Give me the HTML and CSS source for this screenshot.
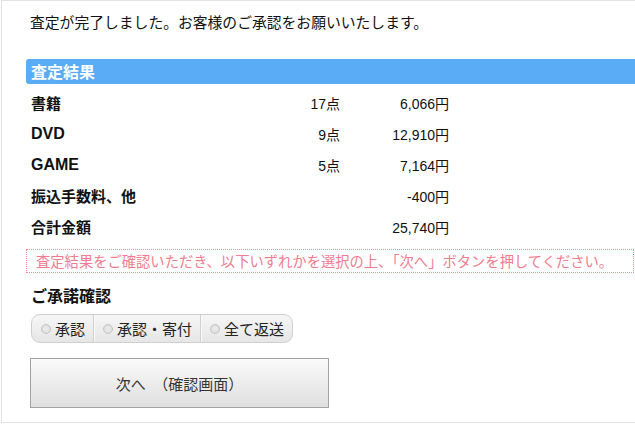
FILE: index.html
```html
<!DOCTYPE html>
<html lang="ja">
<head>
    <meta charset="UTF-8">
    <meta name="viewport" content="width=device-width, initial-scale=1.0">
    <title>査定結果</title>
    <link rel="stylesheet" href="styles.css">
</head>
<body>

    <div class="frame">
        <div class="content">
            <p class="intro">査定が完了しました。お客様のご承認をお願いいたします。</p>

            <h2 class="bar">査定結果</h2>

            <div class="result">
                <div class="label">書籍</div><div class="count">17点</div><div class="price">6,066円</div>
                <div class="label latin">DVD</div><div class="count">9点</div><div class="price">12,910円</div>
                <div class="label latin">GAME</div><div class="count">5点</div><div class="price">7,164円</div>
                <div class="label">振込手数料、他</div><div class="count"></div><div class="price">-400円</div>
                <div class="label">合計金額</div><div class="count"></div><div class="price">25,740円</div>
            </div>

            <p class="notice">査定結果をご確認いただき、以下いずれかを選択の上、「次へ」ボタンを押してください。</p>

            <h3 class="sub">ご承諾確認</h3>

            <div class="choices">
                <label class="choice"><span class="radio"></span>承認</label>
                <label class="choice"><span class="radio"></span>承認・寄付</label>
                <label class="choice"><span class="radio"></span>全て返送</label>
            </div>

            <button class="next">次へ　（確認画面）</button>
        </div>
    </div>

</body>
</html>
```

FILE: styles.css
```css
html, body {
    margin: 0;
    padding: 0;
    overflow: hidden;
}

body {
    font-family: "Noto Sans CJK JP", "Liberation Sans", sans-serif;
    color: #111;
    background-color: #fff;
    width: 635px;
    height: 424px;
}

.frame {
    margin-left: 1px;
    width: 660px;
    height: 423px;
    border: 1px solid #e2e2e2;
    border-right: none;
    box-sizing: border-box;
}

.content {
    width: 608px;
    padding-left: 24px;
}

.intro {
    margin: 0;
    padding: 11px 0 0 4px;
    font-size: 14.8px;
    line-height: 20px;
}

.bar {
    margin: 27px -20px 0 0;
    height: 25px;
    line-height: 25px;
    padding-left: 5px;
    background-color: #5aacf6;
    color: #fff;
    font-size: 16px;
    font-weight: bold;
    border-radius: 3px 0 0 3px;
}

.result {
    display: grid;
    grid-template-columns: 225px 84px 109px;
    grid-auto-rows: 31px;
    align-items: center;
    padding: 3px 0 0 5px;
    font-size: 14px;
}

.label {
    font-weight: bold;
    font-size: 15px;
}

.label.latin {
    font-family: "Liberation Sans", sans-serif;
    font-size: 16px;
}

.count, .price {
    text-align: right;
    font-family: "Liberation Sans", "Noto Sans CJK JP", sans-serif;
}

.notice {
    margin: 7px 0 0 0;
    height: 24px;
    line-height: 22px;
    box-sizing: border-box;
    border: 1px dotted #f08a9a;
    padding-left: 9px;
    color: #f07c8e;
    font-size: 14.3px;
}

.sub {
    margin: 11px 0 0 5px;
    font-size: 16px;
    line-height: 22px;
    font-weight: bold;
}

.choices {
    display: inline-flex;
    margin: 8px 0 0 5px;
    height: 29px;
    border: 1px solid #cfcfcf;
    border-radius: 9px;
    background: linear-gradient(#f6f6f6, #e6e6e6);
    box-sizing: border-box;
    overflow: hidden;
}

.choice {
    display: flex;
    align-items: center;
    gap: 4px;
    padding: 0 8px 0 9px;
    font-size: 15px;
    color: #222;
    border-left: 1px solid #d0d0d0;
    box-shadow: inset 1px 0 0 #fafafa;
}

.choice:first-child {
    border-left: none;
    box-shadow: none;
}

.radio {
    width: 10px;
    height: 10px;
    border-radius: 50%;
    border: 1px solid #c4c4c4;
    background: radial-gradient(circle at 50% 50%, #e8e8e8 30%, #d6d6d6 100%);
    box-sizing: border-box;
}

.next {
    display: block;
    margin: 15px 0 0 4px;
    width: 299px;
    height: 50px;
    border: 1px solid #a2a2a2;
    border-radius: 0;
    background: linear-gradient(#fafafa, #dfdfdf);
    font-family: "Noto Sans CJK JP", sans-serif;
    font-size: 15px;
    color: #333;
    padding: 0;
}
```
